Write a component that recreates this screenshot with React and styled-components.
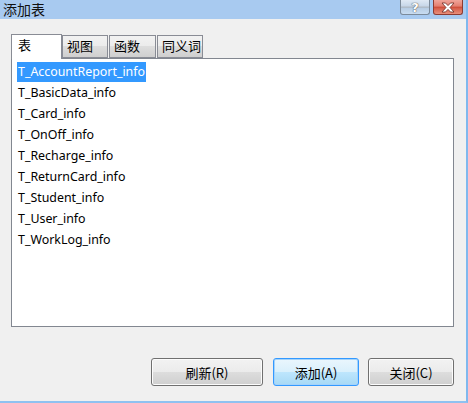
import React, { useState } from "react";
import styled, { createGlobalStyle } from "styled-components";

const GlobalStyle = createGlobalStyle`
  html, body {
    margin: 0;
    padding: 0;
    background: #f0f0f0;
  }
  body {
    font-family: "Noto Sans CJK SC", "Noto Sans", sans-serif;
  }
`;

const Dialog = styled.div`
  width: 468px;
  height: 403px;
  box-sizing: border-box;
  background: #f0f0f0;
  border-right: 2px solid #7fb8ee;
  border-bottom: 2px solid #8fc1f0;
  display: flex;
  flex-direction: column;
  overflow: hidden;
`;

const TitleBar = styled.div`
  height: 19px;
  background: #a8caf0;
  display: flex;
  align-items: flex-start;
  justify-content: space-between;
  padding-left: 3px;
  padding-right: 3px;
`;

const TitleText = styled.div`
  font-size: 14px;
  line-height: 19px;
  color: #111;
`;

const CaptionButtons = styled.div`
  display: flex;
  gap: 3px;
`;

const CaptionButton = styled.div`
  width: 30px;
  height: 15px;
  box-sizing: border-box;
  border: 1px solid ${(p) => (p.$close ? "#8d3b32" : "#7b8a9a")};
  border-top: none;
  border-radius: 0 0 3px 3px;
  background: ${(p) =>
    p.$close
      ? "linear-gradient(#f0a59a 0%, #e47e6f 45%, #c8412c 50%, #d55a46 56%, #e88f7c 100%)"
      : "linear-gradient(#dfe9f4 0%, #c6d6e8 45%, #a5a5a5 50%, #b6cce3 56%, #c8dcf1 100%)"};
  display: flex;
  align-items: center;
  justify-content: center;
  color: #fff;
  font-family: "DejaVu Sans", sans-serif;
  font-weight: bold;
  font-size: 12px;
  line-height: 1;
`;

const HelpMark = styled.span`
  color: #fff;
  font-size: 13px;
  text-shadow: 0 0 1px #4a4a4a, 0 0 1px #4a4a4a;
`;

const Body = styled.div`
  flex: 1;
  padding: 15px 12px 0 11px;
  display: flex;
  flex-direction: column;
`;

const TabRow = styled.div`
  display: flex;
  align-items: flex-end;
  height: 24px;
  position: relative;
  z-index: 1;
`;

const Tab = styled.div`
  box-sizing: border-box;
  width: ${(p) => p.$w}px;
  height: ${(p) => (p.$active ? 25 : 23)}px;
  margin-bottom: ${(p) => (p.$active ? -1 : 0)}px;
  border: 1px solid #898c95;
  border-bottom: ${(p) => (p.$active ? "none" : "1px solid #898c95")};
  margin-right: ${(p) => (p.$active ? 0 : 1)}px;
  background: ${(p) =>
    p.$active ? "#ffffff" : "linear-gradient(#f2f2f2 0%, #ebebeb 50%, #dddddd 50%, #cfcfcf 100%)"};
  font-size: 13px;
  line-height: 20px;
  padding-left: ${(p) => (p.$active ? 6 : 4)}px;
  color: #000;
  cursor: default;
`;

const Panel = styled.div`
  height: 269px;
  box-sizing: border-box;
  background: #fff;
  border: 1px solid #828790;
  padding: 2px 5px;
`;

const Item = styled.div`
  height: 21px;
  display: flex;
  align-items: center;
`;

const ItemLabel = styled.span`
  font-family: "Noto Sans", sans-serif;
  font-size: 12.4px;
  line-height: 20px;
  padding: 0 1px;
  color: ${(p) => (p.$selected ? "#fff" : "#000")};
  background: ${(p) => (p.$selected ? "#3399ff" : "transparent")};
`;

const Footer = styled.div`
  display: flex;
  justify-content: flex-end;
  padding-top: 31px;
`;

const Button = styled.button`
  box-sizing: border-box;
  width: ${(p) => p.$w}px;
  height: 28px;
  margin-left: ${(p) => p.$gap || 0}px;
  border-radius: 3px;
  border: 1px solid ${(p) => (p.$default ? "#3399ff" : "#707070")};
  box-shadow: ${(p) => (p.$default ? "inset 0 0 0 1px #a4d3fb" : "inset 0 0 0 1px #fcfcfc")};
  background: ${(p) =>
    p.$default
      ? "linear-gradient(#eaf6fd 0%, #d9f0fc 50%, #bee6fd 50%, #a7d9f5 100%)"
      : "linear-gradient(#f2f2f2 0%, #ebebeb 50%, #dddddd 50%, #cfcfcf 100%)"};
  font-family: "Noto Sans CJK SC", "Noto Sans", sans-serif;
  font-size: 13px;
  color: #000;
  padding: 0;
`;

const tabs = [
  { name: "表", w: 51 },
  { name: "视图", w: 46 },
  { name: "函数", w: 47 },
  { name: "同义词", w: 46 },
];

const tables = [
  "T_AccountReport_info",
  "T_BasicData_info",
  "T_Card_info",
  "T_OnOff_info",
  "T_Recharge_info",
  "T_ReturnCard_info",
  "T_Student_info",
  "T_User_info",
  "T_WorkLog_info",
];

export default function App() {
  const [tab, setTab] = useState(0);
  const [selected, setSelected] = useState(0);

  return (
    <>
      <GlobalStyle />
      <Dialog>
        <TitleBar>
          <TitleText>添加表</TitleText>
          <CaptionButtons>
            <CaptionButton>
              <HelpMark>?</HelpMark>
            </CaptionButton>
            <CaptionButton $close>
              <svg width="16" height="11" viewBox="0 0 16 11">
                <path
                  d="M2 1 L5.5 1 L8 3.6 L10.5 1 L14 1 L10 5.5 L14 10 L10.5 10 L8 7.4 L5.5 10 L2 10 L6 5.5 Z"
                  fill="#fff"
                  stroke="#6b2a22"
                  strokeWidth="0.8"
                />
              </svg>
            </CaptionButton>
          </CaptionButtons>
        </TitleBar>
        <Body>
          <TabRow>
            {tabs.map((t, i) => (
              <Tab key={t.name} $w={t.w} $active={i === tab} onClick={() => setTab(i)}>
                {t.name}
              </Tab>
            ))}
          </TabRow>
          <Panel>
            {tables.map((name, i) => (
              <Item key={name} onClick={() => setSelected(i)}>
                <ItemLabel $selected={i === selected}>{name}</ItemLabel>
              </Item>
            ))}
          </Panel>
          <Footer>
            <Button $w={112}>刷新(R)</Button>
            <Button $w={86} $gap={10} $default>
              添加(A)
            </Button>
            <Button $w={86} $gap={9}>
              关闭(C)
            </Button>
          </Footer>
        </Body>
      </Dialog>
    </>
  );
}
